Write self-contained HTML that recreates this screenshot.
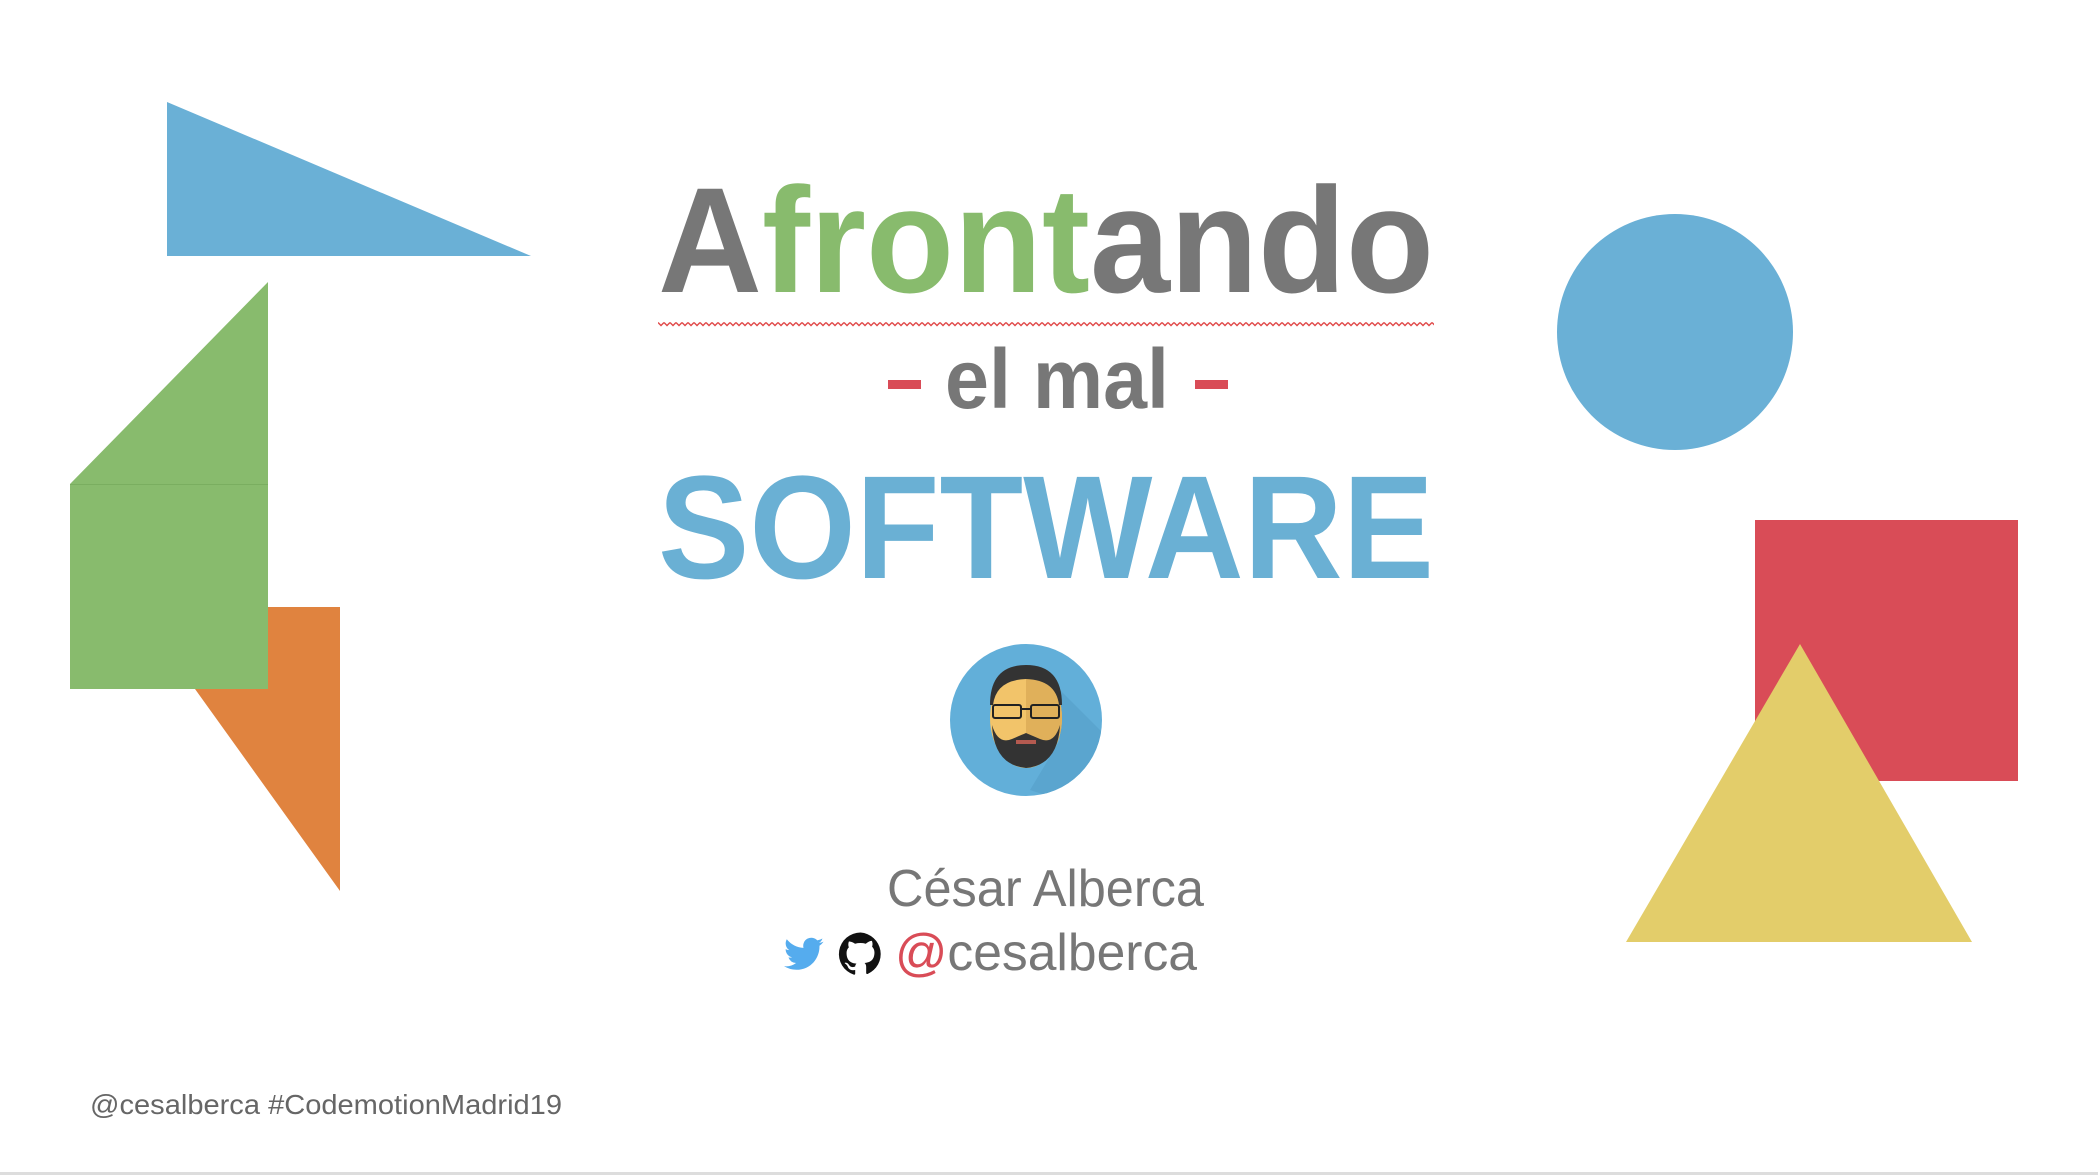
<!DOCTYPE html>
<html><head><meta charset="utf-8"><style>
html,body{margin:0;padding:0;background:#fff;}
svg{display:block;}
</style></head><body>
<svg width="2098" height="1176" viewBox="0 0 2098 1176" xmlns="http://www.w3.org/2000/svg">
<defs>
<pattern id="wave" x="658" y="321" width="6" height="6" patternUnits="userSpaceOnUse">
<polyline points="0,1.5 3,4.5 6,1.5" fill="none" stroke="#e04848" stroke-width="1.4"/>
</pattern>
</defs>
<rect width="2098" height="1176" fill="#fff"/>
<!-- left shapes -->
<polygon points="167,102 167,256 531,256" fill="#6ab0d6"/>
<polygon points="195,689 268,689 268,607 340,607 340,891" fill="#e0833f"/>
<polygon points="268,282 70,484 268,484" fill="#88bb6d"/>
<rect x="70" y="484" width="198" height="205" fill="#88bb6d"/>
<line x1="70" y1="484.5" x2="268" y2="484.5" stroke="#7aae60" stroke-width="1"/>
<!-- right shapes -->
<circle cx="1675" cy="332" r="118" fill="#6ab0d6"/>
<rect x="1755" y="520" width="263" height="261" fill="#d94c57"/>
<polygon points="1800,644 1626,942 1972,942" fill="#e3cd6a"/>
<!-- title -->
<text x="658" y="292" font-family="Liberation Sans, sans-serif" font-weight="bold" font-size="150" textLength="776" lengthAdjust="spacingAndGlyphs" fill="#777"><tspan>A</tspan><tspan fill="#88bb6d">front</tspan><tspan>ando</tspan></text>
<rect x="658" y="321" width="776" height="6" fill="url(#wave)"/>
<rect x="888" y="380" width="33" height="9" fill="#d94c57"/>
<rect x="1195" y="380" width="33" height="9" fill="#d94c57"/>
<text x="945" y="408" font-family="Liberation Sans, sans-serif" font-weight="bold" font-size="84" textLength="224" lengthAdjust="spacingAndGlyphs" fill="#777">el mal</text>
<text x="658" y="578" font-family="Liberation Sans, sans-serif" font-weight="bold" font-size="147" textLength="776" lengthAdjust="spacingAndGlyphs" fill="#6ab0d4">SOFTWARE</text>
<!-- avatar -->
<clipPath id="cc"><circle cx="1026" cy="720" r="76"/></clipPath>
<circle cx="1026" cy="720" r="76" fill="#62afd9"/>
<polygon clip-path="url(#cc)" points="1050,680 1110,740 1060,800 1030,790 1060,740" fill="#5aa5cf"/>
<ellipse cx="1026" cy="718" rx="36" ry="50" fill="#f2c46a"/>
<path d="M1026 668 a36 50 0 0 1 0 100 z" fill="#e0b05a"/>
<path d="M990 705 q0 -40 36 -40 q36 0 36 40 l-3 0 q-3 -25 -33 -26 q-30 1 -33 26 z" fill="#333"/>
<path d="M992 725 q2 40 34 43 q32 -3 34 -43 q-6 20 -20 14 q-14 -6 -14 -6 q0 0 -14 6 q-14 6 -20 -14 z" fill="#333"/>
<rect x="1016" y="740" width="20" height="4" fill="#b45a50"/>
<rect x="993" y="705" width="28" height="13" rx="2" fill="none" stroke="#222" stroke-width="2"/>
<rect x="1031" y="705" width="28" height="13" rx="2" fill="none" stroke="#222" stroke-width="2"/>
<line x1="1021" y1="709" x2="1031" y2="709" stroke="#222" stroke-width="2"/>
<!-- name -->
<text x="887" y="906" font-family="Liberation Sans, sans-serif" font-size="52" textLength="317" lengthAdjust="spacingAndGlyphs" fill="#777">César Alberca</text>
<!-- twitter -->
<path transform="translate(784,934) scale(1.65)" d="M24 4.6a9.8 9.8 0 0 1-2.8.8 4.9 4.9 0 0 0 2.1-2.7 9.9 9.9 0 0 1-3.1 1.2 4.9 4.9 0 0 0-8.4 4.5A14 14 0 0 1 1.7 3.2a4.9 4.9 0 0 0 1.5 6.6 4.9 4.9 0 0 1-2.2-.6v.1a4.9 4.9 0 0 0 3.9 4.8 4.9 4.9 0 0 1-2.2.1 4.9 4.9 0 0 0 4.6 3.4A9.9 9.9 0 0 1 0 19.5a14 14 0 0 0 7.5 2.2c9.1 0 14-7.5 14-14v-.6A10 10 0 0 0 24 4.6z" fill="#55acee"/>
<!-- github -->
<path transform="translate(839,932) scale(1.8)" d="M12 .3a12 12 0 0 0-3.8 23.4c.6.1.8-.3.8-.6v-2c-3.3.7-4-1.6-4-1.6-.6-1.4-1.4-1.8-1.4-1.8-1-.7.1-.7.1-.7 1.2.1 1.8 1.2 1.8 1.2 1 1.8 2.8 1.300 3.500 1 0-.8.4-1.3.7-1.6-2.7-.3-5.5-1.3-5.5-6 0-1.2.5-2.3 1.3-3.1-.2-.4-.6-1.6 0-3.2 0 0 1-.3 3.4 1.2a11.5 11.5 0 0 1 6 0C17.3 4.6 18.3 5 18.3 5c.6 1.6.2 2.8.1 3.2.8.8 1.3 1.9 1.3 3.1 0 4.6-2.8 5.6-5.5 5.9.5.4.9 1 .9 2.2v3.3c0 .3.1.7.8.6A12 12 0 0 0 12 .3" fill="#111"/>
<text x="895" y="970" font-family="Liberation Sans, sans-serif" font-size="52" textLength="302" lengthAdjust="spacingAndGlyphs" fill="#777"><tspan fill="#d94c57">@</tspan>cesalberca</text>
<!-- footer -->
<text x="90" y="1114" font-family="Liberation Sans, sans-serif" font-size="28" textLength="472" lengthAdjust="spacingAndGlyphs" fill="#666">@cesalberca #CodemotionMadrid19</text>
<rect x="0" y="1172" width="2098" height="3" fill="#ddd"/>
</svg>
</body></html>
